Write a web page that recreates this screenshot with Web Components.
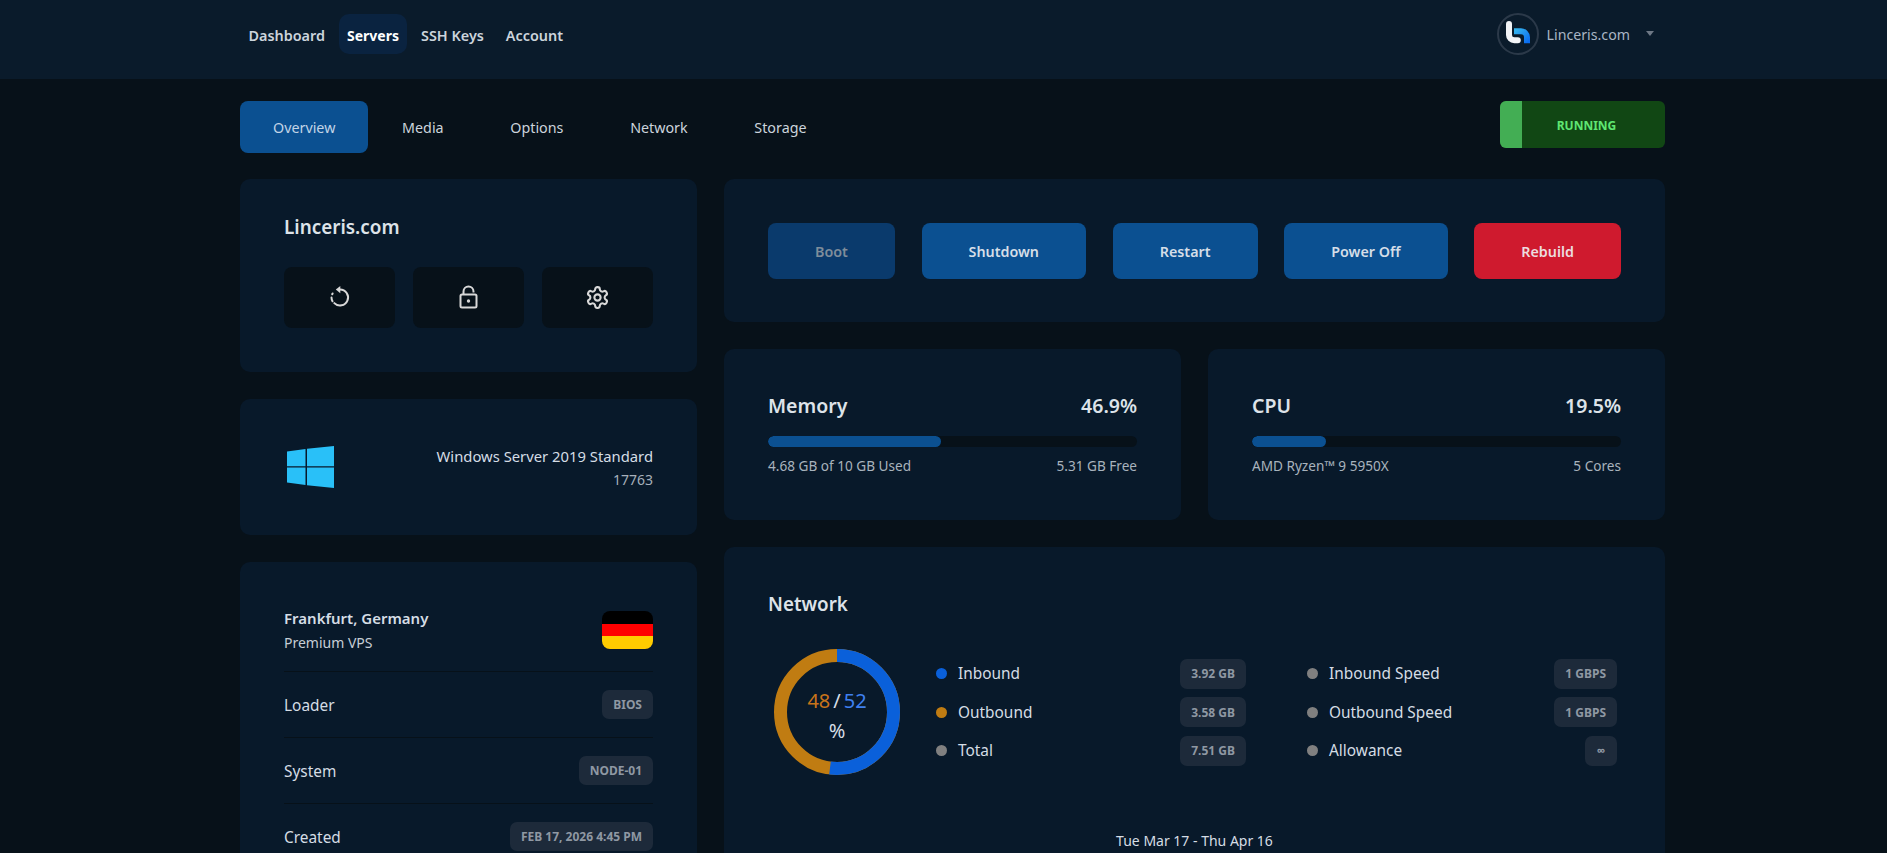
<!DOCTYPE html>
<html lang="en">
<head>
<meta charset="utf-8">
<title>Linceris.com</title>
<style>
  html, body { margin: 0; height: 853px; overflow: hidden; background: #071119; }
  body { font-family: "Noto Sans", "Open Sans", sans-serif; color: #d5dde5; font-size: 14px; }
  .page { width: 1425px; margin-left: 240px; }
  .tabbar { display: flex; justify-content: space-between; align-items: flex-start; margin: 22px 0 26px; }
  .columns { display: grid; grid-template-columns: 457px 941px; gap: 27px; align-items: start; }
  .stack { display: flex; flex-direction: column; gap: 27px; }
  .pair { display: grid; grid-template-columns: 1fr 1fr; gap: 27px; }
</style>
</head>
<body>
<vps-header>
  <nav-link>Dashboard</nav-link>
  <nav-link active>Servers</nav-link>
  <nav-link>SSH Keys</nav-link>
  <nav-link>Account</nav-link>
</vps-header>
<div class="page">
  <div class="tabbar">
    <vps-tabs>
      <vps-tab active>Overview</vps-tab>
      <vps-tab>Media</vps-tab>
      <vps-tab>Options</vps-tab>
      <vps-tab>Network</vps-tab>
      <vps-tab>Storage</vps-tab>
    </vps-tabs>
    <status-badge>RUNNING</status-badge>
  </div>
  <div class="columns">
    <div class="stack">
      <server-card name="Linceris.com"></server-card>
      <os-card name="Windows Server 2019 Standard" build="17763"></os-card>
      <location-card city="Frankfurt, Germany" plan="Premium VPS">
        <info-row label="Loader">BIOS</info-row>
        <info-row label="System">NODE-01</info-row>
        <info-row label="Created">FEB 17, 2026 4:45 PM</info-row>
      </location-card>
    </div>
    <div class="stack">
      <power-card>
        <power-button disabled>Boot</power-button>
        <power-button>Shutdown</power-button>
        <power-button>Restart</power-button>
        <power-button>Power Off</power-button>
        <power-button danger>Rebuild</power-button>
      </power-card>
      <div class="pair">
        <usage-card name="Memory" value="46.9%" percent="46.9" left="4.68 GB of 10 GB Used" right="5.31 GB Free"></usage-card>
        <usage-card name="CPU" value="19.5%" percent="20" left="AMD Ryzen™ 9 5950X" right="5 Cores"></usage-card>
      </div>
      <network-card>
        <legend-row color="#0a60da" label="Inbound">3.92 GB</legend-row>
        <legend-row color="#808080" label="Inbound Speed">1 GBPS</legend-row>
        <legend-row color="#c07c12" label="Outbound">3.58 GB</legend-row>
        <legend-row color="#808080" label="Outbound Speed">1 GBPS</legend-row>
        <legend-row color="#808080" label="Total">7.51 GB</legend-row>
        <legend-row color="#808080" label="Allowance">∞</legend-row>
      </network-card>
    </div>
  </div>
</div>

<script>
// language=CSS
const cardStyles = `
  :host {
    background: #08192a;
    border-radius: 10px;
    box-sizing: border-box;
    display: block;
  }
`;

class VpsHeader extends HTMLElement {
  constructor() {
    super();
    this.attachShadow({ mode: 'open' });
    this.shadowRoot.innerHTML = `
      <style>
        :host {
          background: #0a1b2b;
          box-sizing: border-box;
          display: flex;
          height: 79px;
          justify-content: space-between;
          padding: 13px 233px 0 240px;
        }
        nav { display: flex; gap: 5px; height: 42px; padding-top: 1px; }
        .user { align-items: center; color: #a9b5c4; display: flex; height: 42px; }
        .avatar { border: 2px solid #2b3949; border-radius: 50%; box-sizing: border-box; height: 42px; width: 42px; }
        .avatar svg { display: block; height: 38px; width: 38px; }
        .name { font-size: 14.2px; margin: 0 16px 0 8px; }
        .caret { border-left: 4.5px solid transparent; border-right: 4.5px solid transparent; border-top: 5px solid #6e7885; margin-top: -2px; }
      </style>
      <nav><slot></slot></nav>
      <div class="user">
        <div class="avatar">
          <svg viewBox="0 0 38 38" fill="none">
            <defs>
              <linearGradient id="logo" x1="0" y1="0" x2="1" y2="1">
                <stop offset="0" stop-color="#35b4ee"/>
                <stop offset="1" stop-color="#0a6cf0"/>
              </linearGradient>
            </defs>
            <path d="M15 16.3h7a6 6 0 0 1 6 6v6" stroke="url(#logo)" stroke-width="6"/>
            <path d="M10 9v11a5.3 5.300 0 0 0 5.300 5.300h3.500" stroke="#f2f4f7" stroke-width="6" stroke-linecap="round"/>
          </svg>
        </div>
        <span class="name">Linceris.com</span>
        <span class="caret"></span>
      </div>
    `;
  }
}

class NavLink extends HTMLElement {
  constructor() {
    super();
    this.attachShadow({ mode: 'open' });
    this.shadowRoot.innerHTML = `
      <style>
        :host {
          align-items: center;
          border-radius: 10px;
          box-sizing: border-box;
          color: #ccd4dc;
          display: flex;
          font-size: 14.4px;
          font-weight: 600;
          height: 40px;
          padding: 2px 8.5px 0;
        }
        :host([active]) { background: #0a2340; color: #fff; font-size: 14px; font-weight: 700; }
      </style>
      <slot></slot>
    `;
  }
}

class VpsTabs extends HTMLElement {
  constructor() {
    super();
    this.attachShadow({ mode: 'open' });
    this.shadowRoot.innerHTML = `
      <style>:host { display: flex; gap: 0.7px; }</style>
      <slot></slot>
    `;
  }
}

class VpsTab extends HTMLElement {
  constructor() {
    super();
    this.attachShadow({ mode: 'open' });
    this.shadowRoot.innerHTML = `
      <style>
        :host {
          align-items: center;
          border-radius: 8px;
          color: #ccd4dc;
          display: flex;
          font-size: 14.3px;
          height: 52px;
          padding: 0 33px;
        }
        :host([active]) { background: #0b5091; color: #c2d4e6; }
      </style>
      <slot></slot>
    `;
  }
}

class StatusBadge extends HTMLElement {
  constructor() {
    super();
    this.attachShadow({ mode: 'open' });
    this.shadowRoot.innerHTML = `
      <style>
        :host {
          background: #114714;
          border-radius: 6px;
          display: flex;
          height: 47px;
          overflow: hidden;
          width: 165px;
        }
        .bar { background: #43ae54; width: 22px; }
        .text {
          align-items: center;
          color: #5fe672;
          display: flex;
          flex: 1;
          font-size: 12px;
          font-weight: 700;
          justify-content: center;
          padding: 1px 14px 0 0;
        }
      </style>
      <div class="bar"></div>
      <div class="text"><slot></slot></div>
    `;
  }
}

class ServerCard extends HTMLElement {
  constructor() {
    super();
    this.attachShadow({ mode: 'open' });
    this.shadowRoot.innerHTML = `
      <style>
        ${cardStyles}
        :host { padding: 36px 44px 44px; }
        h2 { color: #dde3e9; font-size: 18.9px; font-weight: 600; line-height: 24px; margin: 0 0 28px; }
        .tools { display: grid; gap: 18px; grid-template-columns: repeat(3, 1fr); }
        button {
          align-items: center;
          background: #071119;
          border: 0;
          border-radius: 8px;
          color: #d8d8d8;
          display: flex;
          height: 61px;
          justify-content: center;
          padding: 0;
        }
        svg { display: block; fill: none; stroke: currentColor; stroke-width: 2; }
      </style>
      <h2></h2>
      <div class="tools">
        <button>
          <svg width="24" height="24" viewBox="0 0 24 24" stroke-linecap="round">
            <path d="M12 3.500a8 8 0 1 1-5.700 13.600" />
            <path d="M4.500 15.300a8 8 0 0 1-1-3.800M4.200 8.300l.4-.8" />
            <path d="M12.300 0v7.200L7.800 3.600z" fill="currentColor" stroke="none" />
          </svg>
        </button>
        <button>
          <svg width="24" height="26" viewBox="0 0 24 26" stroke-linejoin="round">
            <rect x="3.500" y="9.500" width="16" height="13" rx="1.500" />
            <path d="M6.500 9.500V6.500a5 5 0 0 1 10 0V7.500" />
            <circle cx="11.500" cy="16" r="1.700" fill="currentColor" stroke="none" />
          </svg>
        </button>
        <button>
          <svg width="25" height="25" viewBox="0 0 24 24" stroke-linecap="round" stroke-linejoin="round">
            <path d="M12.220 2h-.44a2 2 0 0 0-2 2v.18a2 2 0 0 1-1 1.730l-.43.25a2 2 0 0 1-2 0l-.15-.08a2 2 0 0 0-2.730.73l-.22.38a2 2 0 0 0 .73 2.730l.15.1a2 2 0 0 1 1 1.720v.51a2 2 0 0 1-1 1.740l-.15.09a2 2 0 0 0-.73 2.730l.22.38a2 2 0 0 0 2.730.73l.15-.08a2 2 0 0 1 2 0l.43.25a2 2 0 0 1 1 1.730V20a2 2 0 0 0 2 2h.44a2 2 0 0 0 2-2v-.18a2 2 0 0 1 1-1.730l.43-.25a2 2 0 0 1 2 0l.15.08a2 2 0 0 0 2.730-.73l.22-.39a2 2 0 0 0-.73-2.730l-.15-.08a2 2 0 0 1-1-1.740v-.5a2 2 0 0 1 1-1.740l.15-.09a2 2 0 0 0 .73-2.730l-.22-.38a2 2 0 0 0-2.730-.73l-.15.08a2 2 0 0 1-2 0l-.43-.25a2 2 0 0 1-1-1.730V4a2 2 0 0 0-2-2z" />
            <circle cx="12" cy="12" r="3" />
          </svg>
        </button>
      </div>
    `;
  }

  connectedCallback() {
    this.shadowRoot.querySelector('h2').textContent = this.getAttribute('name');
  }
}

class OsCard extends HTMLElement {
  constructor() {
    super();
    this.attachShadow({ mode: 'open' });
    this.shadowRoot.innerHTML = `
      <style>
        ${cardStyles}
        :host { align-items: center; display: flex; height: 136px; justify-content: space-between; padding: 0 44px 0 47px; }
        .text { line-height: 23px; padding-top: 2px; text-align: right; }
        .name { color: #d5dde5; font-size: 14.8px; }
        .build { color: #a6b0ba; }
        svg { display: block; fill: #29c0f8; }
      </style>
      <svg width="47" height="42" viewBox="0 0 47 42">
        <polygon points="0,5.500 18.500,3 18.500,20.300 0,20.300" />
        <polygon points="20,2.800 47,0 47,20.300 20,20.300" />
        <polygon points="0,21.500 18.500,21.500 18.500,39 0,36.500" />
        <polygon points="20,21.500 47,21.500 47,42 20,39.200" />
      </svg>
      <div class="text">
        <div class="name"></div>
        <div class="build"></div>
      </div>
    `;
  }

  connectedCallback() {
    this.shadowRoot.querySelector('.name').textContent = this.getAttribute('name');
    this.shadowRoot.querySelector('.build').textContent = this.getAttribute('build');
  }
}

class LocationCard extends HTMLElement {
  constructor() {
    super();
    this.attachShadow({ mode: 'open' });
    this.shadowRoot.innerHTML = `
      <style>
        ${cardStyles}
        :host { padding: 44px 44px 44px; }
        .top { align-items: center; display: flex; justify-content: space-between; padding-bottom: 16px; }
        .city { color: #d5dde5; font-size: 15px; font-weight: 600; line-height: 24px; }
        .plan { color: #c6ced6; line-height: 24px; margin-top: 1px; }
        .flag {
          background: linear-gradient(#000 0 33.3%, #f00 33.3% 66.6%, #fc0 66.6%);
          border-radius: 8px;
          height: 38px;
          margin-top: -1px;
          width: 51px;
        }
      </style>
      <div class="top">
        <div>
          <div class="city"></div>
          <div class="plan"></div>
        </div>
        <div class="flag"></div>
      </div>
      <slot></slot>
    `;
  }

  connectedCallback() {
    this.shadowRoot.querySelector('.city').textContent = this.getAttribute('city');
    this.shadowRoot.querySelector('.plan').textContent = this.getAttribute('plan');
  }
}

// language=CSS
const pillStyles = `
  .pill {
    align-items: center;
    background: #1d2a3a;
    border-radius: 7px;
    color: #8f98a3;
    display: flex;
    font-size: 12px;
    font-weight: 700;
    height: 29px;
    justify-content: center;
    min-width: 10px;
    padding: 0 11px;
  }
`;

class InfoRow extends HTMLElement {
  constructor() {
    super();
    this.attachShadow({ mode: 'open' });
    this.shadowRoot.innerHTML = `
      <style>
        ${pillStyles}
        :host {
          align-items: center;
          border-top: 1px solid #071119;
          color: #d5dde5;
          display: flex;
          font-size: 15.4px;
          height: 65px;
          justify-content: space-between;
        }
        .label { padding-top: 2px; }
      </style>
      <span class="label"></span>
      <span class="pill"><slot></slot></span>
    `;
  }

  connectedCallback() {
    this.shadowRoot.querySelector('.label').textContent = this.getAttribute('label');
  }
}

class PowerCard extends HTMLElement {
  constructor() {
    super();
    this.attachShadow({ mode: 'open' });
    this.shadowRoot.innerHTML = `
      <style>
        ${cardStyles}
        :host { display: flex; justify-content: space-between; padding: 44px 44px 43px; }
      </style>
      <slot></slot>
    `;
  }
}

class PowerButton extends HTMLElement {
  constructor() {
    super();
    this.attachShadow({ mode: 'open' });
    this.shadowRoot.innerHTML = `
      <style>
        :host {
          align-items: center;
          background: #0b5091;
          border-radius: 8px;
          color: #d5dee8;
          display: flex;
          font-size: 14.3px;
          font-weight: 600;
          height: 56px;
          padding: 0 47px;
        }
        :host([disabled]) { background: #0a3a6c; color: #7f8d9b; }
        :host([danger]) { background: #cf1a2e; color: #ecdcdf; }
      </style>
      <slot></slot>
    `;
  }
}

class UsageCard extends HTMLElement {
  constructor() {
    super();
    this.attachShadow({ mode: 'open' });
    this.shadowRoot.innerHTML = `
      <style>
        ${cardStyles}
        :host { padding: 43px 44px 44px; height: 171px; }
        .row { display: flex; justify-content: space-between; }
        .heading { color: #dde3e9; font-size: 19.5px; font-weight: 600; line-height: 28px; }
        .track { background: #071119; border-radius: 6px; height: 11px; margin: 16px 0 10px; overflow: hidden; }
        .fill { background: #0b5091; border-radius: 6px; height: 100%; }
        .foot { color: #a8b3bd; font-size: 13.6px; line-height: 18px; }
      </style>
      <div class="row heading"><span class="name"></span><span class="value"></span></div>
      <div class="track"><div class="fill"></div></div>
      <div class="row foot"><span class="left"></span><span class="right"></span></div>
    `;
  }

  connectedCallback() {
    for (const key of ['name', 'value', 'left', 'right']) {
      this.shadowRoot.querySelector('.' + key).textContent = this.getAttribute(key);
    }
    this.shadowRoot.querySelector('.fill').style.width = this.getAttribute('percent') + '%';
  }
}

class NetworkCard extends HTMLElement {
  constructor() {
    super();
    this.attachShadow({ mode: 'open' });
    this.shadowRoot.innerHTML = `
      <style>
        ${cardStyles}
        :host { padding: 43px 44px 44px; }
        h2 { color: #dde3e9; font-size: 18.8px; font-weight: 600; line-height: 28px; margin: 0 0 31px; }
        .body { align-items: center; display: flex; gap: 36px; padding-left: 6px; }
        .donut { display: grid; height: 126px; place-items: center; width: 126px; }
        .donut > * { grid-area: 1 / 1; }
        .donut svg { display: block; transform: rotate(-90deg); }
        .center { font-size: 20px; line-height: 30px; padding-top: 8px; text-align: center; }
        .ratio { display: flex; gap: 3px; }
        .out { color: #c8741a; }
        .in { color: #3f80f0; }
        .legend { display: grid; flex: 1; gap: 8.5px 61px; grid-template-columns: 1fr 1fr; margin-right: 4px; }
        .date { color: #d5dde5; line-height: 20px; margin-top: 56px; text-align: center; }
      </style>
      <h2>Network</h2>
      <div class="body">
        <div class="donut">
          <svg width="126" height="126" viewBox="0 0 126 126" fill="none" stroke-width="13">
            <circle cx="63" cy="63" r="56.5" stroke="#c07c12" />
            <circle cx="63" cy="63" r="56.5" stroke="#0a60da" pathLength="100" stroke-dasharray="52 48" />
          </svg>
          <div class="center">
            <div class="ratio"><span class="out">48</span><span>/</span><span class="in">52</span></div>
            <div>%</div>
          </div>
        </div>
        <div class="legend"><slot></slot></div>
      </div>
      <div class="date">Tue Mar 17 - Thu Apr 16</div>
    `;
  }
}

class LegendRow extends HTMLElement {
  constructor() {
    super();
    this.attachShadow({ mode: 'open' });
    this.shadowRoot.innerHTML = `
      <style>
        ${pillStyles}
        :host { align-items: center; color: #d5dde5; display: flex; font-size: 15.4px; height: 30px; }
        .dot { border-radius: 50%; height: 11px; margin-right: 11px; width: 11px; }
        .label { flex: 1; }
        .pill { height: 30px; }
      </style>
      <span class="dot"></span>
      <span class="label"></span>
      <span class="pill"><slot></slot></span>
    `;
  }

  connectedCallback() {
    this.shadowRoot.querySelector('.dot').style.background = this.getAttribute('color');
    this.shadowRoot.querySelector('.label').textContent = this.getAttribute('label');
  }
}

customElements.define('vps-header', VpsHeader);
customElements.define('nav-link', NavLink);
customElements.define('vps-tabs', VpsTabs);
customElements.define('vps-tab', VpsTab);
customElements.define('status-badge', StatusBadge);
customElements.define('server-card', ServerCard);
customElements.define('os-card', OsCard);
customElements.define('location-card', LocationCard);
customElements.define('info-row', InfoRow);
customElements.define('power-card', PowerCard);
customElements.define('power-button', PowerButton);
customElements.define('usage-card', UsageCard);
customElements.define('network-card', NetworkCard);
customElements.define('legend-row', LegendRow);
</script>
</body>
</html>
